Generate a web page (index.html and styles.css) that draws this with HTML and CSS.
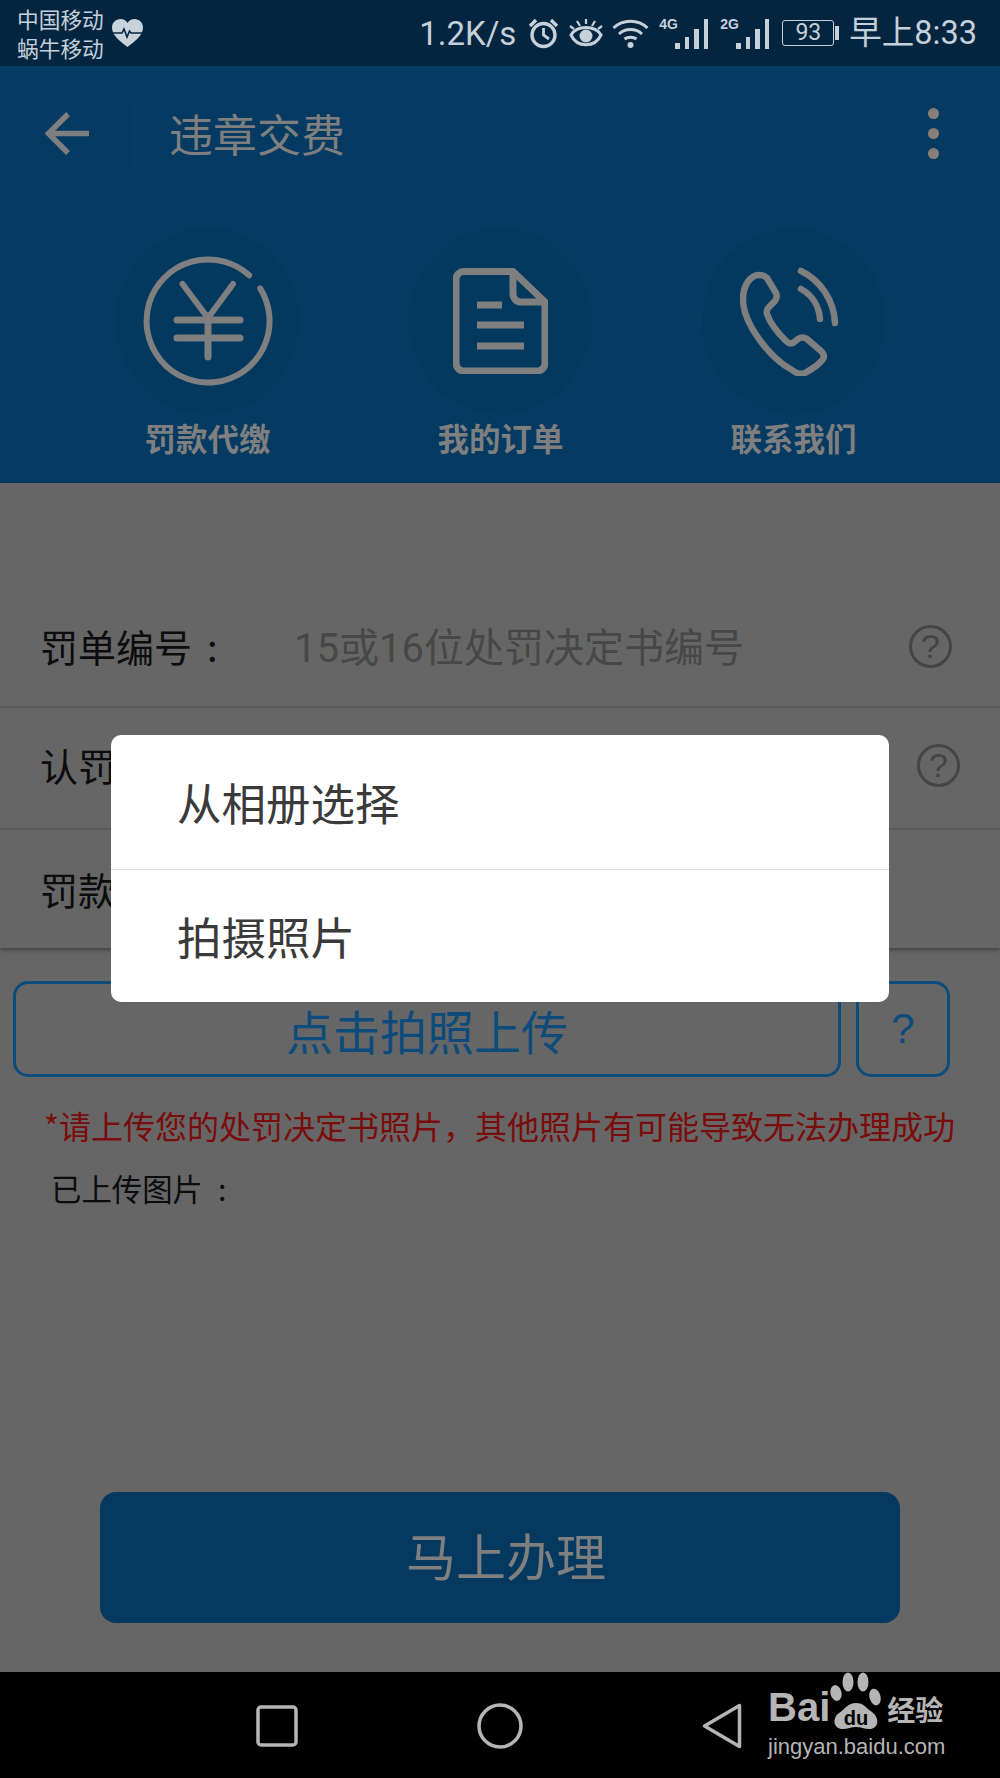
FILE: index.html
```html
<!DOCTYPE html>
<html lang="zh-CN">
<head>
  <meta charset="UTF-8" />
  <meta name="viewport" content="width=device-width, initial-scale=1" />
  <title>违章交费</title>
  <link rel="stylesheet" href="styles.css">
</head>
<body>
  <div class="app">
    <div class="status-bar">
      <div class="carriers">
        <span>中国移动</span>
        <span>蜗牛移动</span>
      </div>
      <svg class="heart" width="33" height="30" viewBox="0 0 33 30">
        <path d="M16.5 29 C10 24 1 18 1 9.5 C1 4.5 5 1 9.5 1 C12.5 1 15 2.5 16.5 5 C18 2.5 20.5 1 23.5 1 C28 1 32 4.5 32 9.5 C32 18 23 24 16.5 29 Z" fill="#c9d3dc"/>
        <path d="M1 15 H11 L13 11 L16 19 L18.5 13 L20 15 H32" fill="none" stroke="#03253f" stroke-width="1.6"/>
      </svg>
      <div class="status-right">
        <span class="speed">1.2K/s</span>
        <svg class="ic-alarm" width="31" height="31" viewBox="0 0 31 31" fill="none" stroke="#c5d0da" stroke-width="3.4">
          <circle cx="15.5" cy="17" r="11.5"/>
          <path d="M15.5 10 V17 L21 21" stroke-width="2.8"/>
          <path d="M2 8 L8 2 M29 8 L23 2"/>
        </svg>
        <svg class="ic-eye" width="34" height="30" viewBox="0 0 34 30" fill="none" stroke="#c5d0da" stroke-width="3">
          <path d="M2 17 C8 7 26 7 32 17 C26 30 8 30 2 17 Z"/>
          <circle cx="17" cy="18" r="6.5" fill="#c5d0da" stroke="none"/>
          <path d="M17 1 V6 M8 3 L11 8 M26 3 L23 8 M1 8 L5 11 M33 8 L29 11" stroke-width="2.2"/>
        </svg>
        <svg class="ic-wifi" width="37" height="29" viewBox="0 0 37 29" fill="none" stroke="#c5d0da" stroke-width="3">
          <path d="M1.5 9 C11 0 26 0 35.5 9"/>
          <path d="M7 15 C13 9 24 9 30 15"/>
          <path d="M12.5 20 C15.5 17.5 21.5 17.5 24.5 20"/>
          <circle cx="18.5" cy="26" r="3" fill="#c5d0da" stroke="none"/>
        </svg>
        <div class="signal">
          <span class="net">4G</span>
          <div class="bars"><i class="b1"></i><i class="b2"></i><i class="b3"></i><i class="b4"></i></div>
        </div>
        <div class="signal">
          <span class="net">2G</span>
          <div class="bars"><i class="b1"></i><i class="b2"></i><i class="b3"></i><i class="b4"></i></div>
        </div>
        <div class="battery">
          <span class="battery-box">93</span>
          <i class="battery-nub"></i>
        </div>
        <span class="clock">早上8:33</span>
      </div>
    </div>

    <header class="top">
      <div class="nav-row">
        <svg class="back" width="46" height="45" viewBox="0 0 46 45" fill="none" stroke="#7f7f7f" stroke-width="5.5">
          <path d="M45 22.5 H5"/>
          <path d="M24 3 L4.5 22.5 L24 42"/>
        </svg>
        <i class="nav-sep"></i>
        <h1 class="title">违章交费</h1>
        <div class="more"><i></i><i></i><i></i></div>
      </div>
      <div class="shortcuts">
        <div class="shortcut">
          <div class="disc">
            <svg width="130" height="130" viewBox="0 0 130 130" fill="none" stroke="#7f7f7f" stroke-width="6" stroke-linecap="round">
              <path d="M117.2 32.4 A61.5 61.5 0 1 1 106.2 19.3"/>
              <path d="M39.5 28 L65 62 L90 28"/>
              <path d="M65 60 V101 M34 64 H97 M34 82 H97" stroke-width="7"/>
            </svg>
          </div>
          <span class="shortcut-label">罚款代缴</span>
        </div>
        <div class="shortcut">
          <div class="disc">
            <svg width="95" height="106" viewBox="0 0 95 106" fill="none" stroke="#7f7f7f" stroke-width="7" stroke-linejoin="round">
              <path d="M60 3.5 H11 a8 8 0 0 0 -8 8 V95 a8 8 0 0 0 8 8 H84 a8 8 0 0 0 8 -8 V34 Z"/>
              <path d="M60 3.5 V26 a8 8 0 0 0 8 8 H92"/>
              <path d="M24 37 H49 M24 57 H71 M24 78 H71"/>
            </svg>
          </div>
          <span class="shortcut-label">我的订单</span>
        </div>
        <div class="shortcut">
          <div class="disc">
            <svg class="ic-phone" width="100" height="110" viewBox="0 0 100 110" fill="none" stroke="#7f7f7f" stroke-width="6.5" stroke-linecap="round" stroke-linejoin="round">
              <path d="M19 9 C10 9 3 20 3 33 C3 58 30 92 52 104 C56 107 61 109 65 107 C72 103 80 98 83 93 C85 90 83 87 81 85 L67 73 C64 71 61 71 58 73 L53 77 C50 78 48 77 46 75 C38 67 30 57 27 48 C26 45 27 43 29 41 L35 35 C37 32 37 29 36 27 L27 12 C25 10 22 9 19 9 Z"/>
              <path d="M61 5 C80 14 94 34 95 57"/>
              <path d="M61 23 C72 29 79 40 80 53"/>
            </svg>
          </div>
          <span class="shortcut-label">联系我们</span>
        </div>
      </div>
    </header>

    <main class="content">
      <div class="form">
        <div class="row row-first">
          <span class="row-label">罚单编号<span class="colon">:</span></span>
          <span class="placeholder">15或16位处罚决定书编号</span>
          <span class="help">?</span>
        </div>
        <div class="row row-second">
          <span class="row-label">认罚</span>
          <span class="help">?</span>
        </div>
        <div class="row row-third">
          <span class="row-label">罚款</span>
        </div>
      </div>

      <div class="upload">
        <button class="upload-btn">点击拍照上传</button>
        <button class="upload-help">?</button>
      </div>
      <p class="warn">*请上传您的处罚决定书照片，其他照片有可能导致无法办理成功</p>
      <p class="uploaded">已上传图片<span class="colon">:</span></p>

      <button class="submit">马上办理</button>
    </main>

    <footer class="nav-bar">
      <svg class="nav-square" width="42" height="42" viewBox="0 0 42 42" fill="none" stroke="#b5b5b5" stroke-width="3.5">
        <rect x="2" y="2" width="38" height="38" rx="3"/>
      </svg>
      <svg class="nav-circle" width="46" height="46" viewBox="0 0 46 46" fill="none" stroke="#b5b5b5" stroke-width="3.5">
        <circle cx="23" cy="23" r="21"/>
      </svg>
      <svg class="nav-back" width="40" height="46" viewBox="0 0 40 46" fill="none" stroke="#b5b5b5" stroke-width="3.5" stroke-linejoin="round">
        <path d="M37.5 2.5 V43.5 L2.5 23 Z"/>
      </svg>
      <div class="watermark">
        <div class="wm-top">
          <span class="wm-bai">Bai</span>
          <svg class="paw" width="52" height="58" viewBox="0 0 52 58">
            <ellipse cx="6" cy="21" rx="5.5" ry="8" fill="#b5b5b5" transform="rotate(-12 6 21)"/>
            <ellipse cx="18" cy="10" rx="5.5" ry="9.5" fill="#b5b5b5"/>
            <ellipse cx="33" cy="10" rx="5.5" ry="9.5" fill="#b5b5b5"/>
            <ellipse cx="45" cy="25" rx="5.5" ry="8.5" fill="#b5b5b5" transform="rotate(-14 45 25)"/>
            <path d="M26 31 C34 31 36 36 42 40 C50 46 49 57 39 57 C34 57 31 55 26 55 C21 55 18 57 13 57 C3 57 2 46 9 41 C15 37 18 31 26 31 Z" fill="#b5b5b5"/>
            <text x="26" y="53" text-anchor="middle" class="paw-du">du</text>
          </svg>
          <span class="wm-cn">经验</span>
        </div>
        <span class="wm-url">jingyan.baidu.com</span>
      </div>
    </footer>

    <div class="dialog">
      <div class="dialog-item">从相册选择</div>
      <div class="dialog-item">拍摄照片</div>
    </div>
  </div>
</body>
</html>
```

FILE: styles.css
```css
:root {
  --status-bg: #03253f;
  --status-fg: #c5d0da;
  --header-bg: #053a62;
  --disc-bg: #03385f;
  --icon: #7f7f7f;
  --page-bg: #666666;
  --line: #5a5a5a;
  --blue: #0d4b7a;
}
* {
  box-sizing: border-box;
  margin: 0;
  padding: 0;
}
body {
  font-family: "Noto Sans CJK SC", "Noto Sans", sans-serif;
  background: var(--page-bg);
}
.app {
  position: relative;
  display: flex;
  flex-direction: column;
  width: 1000px;
  height: 1778px;
  overflow: hidden;
}

/* status bar */
.status-bar {
  display: flex;
  align-items: center;
  height: 66px;
  padding: 0 23px 0 17px;
  background: var(--status-bg);
  color: var(--status-fg);
}
.carriers {
  display: flex;
  flex-direction: column;
  font-size: 21.7px;
  line-height: 29px;
}
.heart {
  margin-left: 7px;
}
.status-right {
  display: flex;
  align-items: center;
  margin-left: auto;
}
.speed {
  margin-right: 12px;
  font-family: Roboto, sans-serif;
  font-size: 33px;
}
.ic-eye {
  margin-left: 10px;
}
.ic-wifi {
  margin-left: 9px;
}
.signal {
  position: relative;
  width: 49px;
  height: 32px;
  margin-left: 10px;
}
.signal + .signal {
  margin-left: 12px;
}
.net {
  position: absolute;
  top: 0;
  left: 0;
  font-family: "Liberation Sans", sans-serif;
  font-size: 14px;
  font-weight: 700;
  line-height: 15px;
}
.bars {
  position: absolute;
  right: 0;
  bottom: 0;
  display: flex;
  align-items: flex-end;
  gap: 5px;
}
.bars i {
  width: 4.5px;
  background: var(--status-fg);
}
.bars .b1 { height: 6px; }
.bars .b2 { height: 12px; }
.bars .b3 { height: 20px; }
.bars .b4 { height: 30px; }
.battery {
  display: flex;
  align-items: center;
  margin-left: 13px;
}
.battery-box {
  width: 52px;
  height: 26px;
  border: 1.5px solid var(--status-fg);
  border-radius: 3px;
  font-family: Roboto, sans-serif;
  font-size: 23px;
  line-height: 23px;
  text-align: center;
}
.battery-nub {
  width: 4px;
  height: 14px;
  margin-left: 1px;
  background: var(--status-fg);
}
.clock {
  margin-left: 10px;
  font-family: Roboto, "Noto Sans CJK SC", sans-serif;
  font-size: 32.5px;
  line-height: 40px;
}

/* header */
.top {
  height: 417px;
  background: var(--header-bg);
  color: var(--icon);
}
.nav-row {
  display: flex;
  align-items: center;
  height: 134px;
  padding: 0 61px 0 44px;
}
.nav-sep {
  width: 1px;
  height: 66px;
  margin-left: 44px;
  background: #0b4268;
}
.title {
  margin-left: 34px;
  font-size: 44px;
  font-weight: 400;
  line-height: 60px;
}
.more {
  display: flex;
  flex-direction: column;
  gap: 9px;
  margin-left: auto;
}
.more i {
  width: 11px;
  height: 11px;
  border-radius: 50%;
  background: #8a7f78;
}
.shortcuts {
  display: flex;
  gap: 110px;
  padding: 28px 0 0 116px;
}
.shortcut {
  display: flex;
  flex-direction: column;
  align-items: center;
  width: 183px;
}
.disc {
  display: flex;
  justify-content: center;
  align-items: center;
  width: 183px;
  height: 186px;
  border-radius: 50%;
  background: var(--disc-bg);
}
.ic-phone {
  margin-right: 7px;
}
.shortcut-label {
  margin-top: 1px;
  font-size: 31.5px;
  font-weight: 700;
  line-height: 44px;
}

/* form */
.content {
  display: flex;
  flex: 1;
  flex-direction: column;
  background: var(--page-bg);
  color: #0c0c0c;
}
.form {
  padding-top: 103px;
  box-shadow: 0 2px 4px rgba(0, 0, 0, 0.35);
}
.row {
  display: flex;
  align-items: center;
  height: 122px;
  padding: 0 48px 0 40px;
  border-bottom: 2px solid var(--line);
}
.row-second {
  padding-right: 40px;
  padding-bottom: 6px;
}
.row-third {
  height: 118px;
  border-bottom: 0;
}
.row-label {
  width: 254px;
  font-size: 38px;
  line-height: 50px;
}
.colon {
  margin-left: 15px;
}
.placeholder {
  padding-top: 6px;
  font-family: Roboto, "Noto Sans CJK SC", sans-serif;
  font-size: 40px;
  line-height: 50px;
  color: #474747;
}
.help {
  width: 43px;
  height: 43px;
  margin-left: auto;
  border: 3px solid #444;
  border-radius: 50%;
  font-family: "Liberation Sans", sans-serif;
  font-size: 34px;
  line-height: 37px;
  text-align: center;
  color: #444;
}

/* upload */
.upload {
  display: flex;
  gap: 15px;
  margin-top: 33px;
  padding: 0 50px 0 13px;
}
.upload-btn,
.upload-help {
  height: 96px;
  border: 3px solid var(--blue);
  border-radius: 15px;
  background: none;
  font-family: inherit;
  color: var(--blue);
}
.upload-btn {
  flex: 1;
  font-size: 47px;
}
.upload-help {
  width: 94px;
  font-family: "Liberation Sans", sans-serif;
  font-size: 42px;
}
.warn {
  margin: 25px 0 0 44px;
  font-size: 32px;
  line-height: 46px;
  color: #7a0c0c;
  white-space: nowrap;
}
.uploaded {
  margin: 18px 0 0 51px;
  font-size: 30.4px;
  line-height: 44px;
}
.submit {
  height: 131px;
  margin: auto 100px 49px;
  padding: 0 0 8px 12px;
  border: 0;
  border-radius: 16px;
  background: #05395f;
  font-family: inherit;
  font-size: 50px;
  color: #7f7f7f;
}

/* bottom nav */
.nav-bar {
  position: relative;
  height: 106px;
  background: #000;
  color: #b5b5b5;
}
.nav-square,
.nav-circle,
.nav-back {
  position: absolute;
  top: 31px;
}
.nav-square { left: 256px; top: 33px; }
.nav-circle { left: 477px; }
.nav-back { left: 702px; }
.watermark {
  position: absolute;
  top: 0;
  left: 768px;
  display: flex;
  flex-direction: column;
}
.wm-top {
  display: flex;
  align-items: flex-end;
  height: 58px;
}
.wm-bai {
  font-family: "Liberation Sans", sans-serif;
  font-size: 40px;
  font-weight: 700;
  line-height: 46px;
}
.paw-du {
  font-family: "Liberation Sans", sans-serif;
  font-size: 20px;
  font-weight: 700;
  fill: #000;
}
.wm-cn {
  margin-left: 5px;
  font-size: 28px;
  font-weight: 700;
  line-height: 42px;
}
.wm-url {
  margin-top: 5px;
  font-family: "Liberation Sans", sans-serif;
  font-size: 22px;
  line-height: 24px;
}

/* photo picker dialog */
.dialog {
  position: absolute;
  top: 735px;
  left: 111px;
  width: 778px;
  border-radius: 10px;
  background: #fff;
  color: #3a3a3a;
}
.dialog-item {
  display: flex;
  align-items: center;
  height: 133.5px;
  padding-left: 66px;
  font-size: 44.5px;
}
.dialog-item + .dialog-item {
  border-top: 1px solid #dcdcdc;
}
```
